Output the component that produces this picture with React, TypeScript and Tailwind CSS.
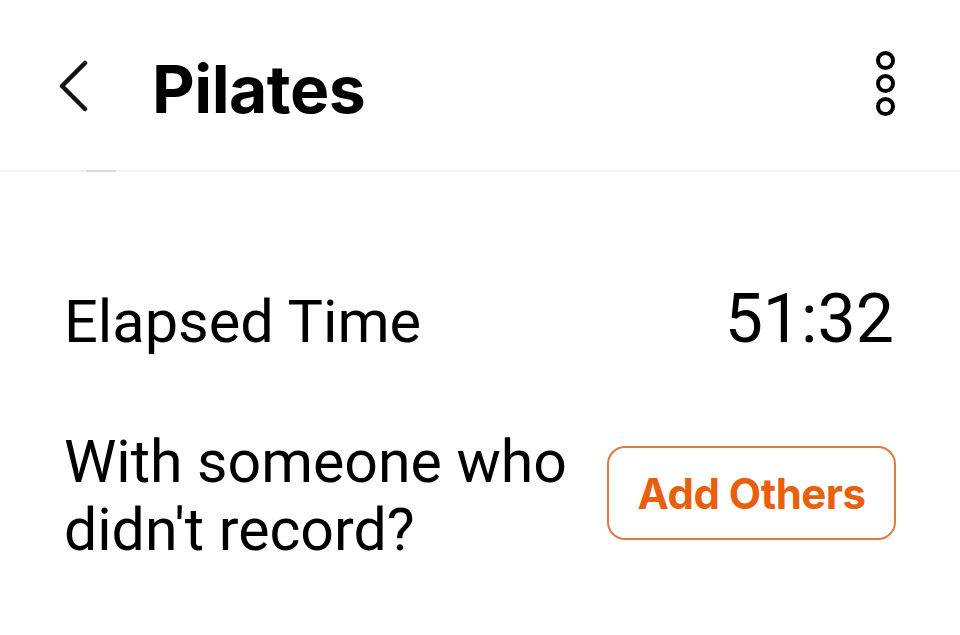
import React from "react";

export default function App() {
  return (
    <div className="w-[960px] h-[635px] bg-white overflow-hidden" style={{ fontFamily: "Inter, 'Noto Sans', sans-serif" }}>
      <header className="h-[172px] border-b-2 border-[#f2f2f2] flex items-start relative">
        <div className="flex items-center h-[176px] pb-[4px] w-full">
          <div className="w-[152px] flex items-center pl-[56px] pb-[1px]">
            <svg width="34" height="52" viewBox="0 0 34 52" fill="none">
              <path d="M29 3 L6 26 L29 49" stroke="#111" strokeWidth="4.5" strokeLinecap="round" strokeLinejoin="round" />
            </svg>
          </div>
          <h1 className="text-[66px] font-bold text-black tracking-[-0.5px] leading-none flex-1 mt-[6px]">Pilates</h1>
          <div className="pr-[65px] flex flex-col gap-[4px] pb-[6px]">
            {[0, 1, 2].map((i) => (
              <div key={i} className="w-[19px] h-[19px] rounded-full border-[4.5px] border-black" />
            ))}
          </div>
        </div>
        <div className="absolute left-[86px] bottom-[-2px] w-[30px] h-[2px] bg-[#d9d9d9]" />
      </header>
      <main className="pl-[64px] pr-[66px]" style={{ fontFamily: "Roboto, 'Noto Sans', sans-serif" }}>
        <div className="flex items-end justify-between mt-[113px]">
          <span className="text-[59.5px] text-black leading-none">Elapsed Time</span>
          <span className="text-[68px] text-black leading-none -mb-[1px]">51:32</span>
        </div>
        <div className="flex items-center justify-between mt-[76px]">
          <span className="text-[59px] text-black leading-[68px]">With someone who<br />didn't record?</span>
          <button className="w-[289px] h-[94px] mb-[6px] rounded-[18px] border-2 border-[#e07a45] text-[#e8600e] text-[42px] font-bold tracking-[-0.5px] flex items-center justify-center -mr-[2px]" style={{ fontFamily: "Inter, sans-serif" }}>
            Add Others
          </button>
        </div>
      </main>
    </div>
  );
}
